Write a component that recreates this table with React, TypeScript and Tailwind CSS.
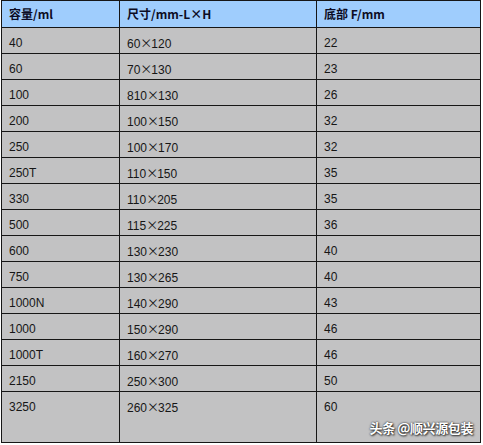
const header = ["容量/ml", "尺寸/mm-L×H", "底部 F/mm"];

const rows: [string, string, string, string][] = [
  ["40", "60", "120", "22"],
  ["60", "70", "130", "23"],
  ["100", "810", "130", "26"],
  ["200", "100", "150", "32"],
  ["250", "100", "170", "32"],
  ["250T", "110", "150", "35"],
  ["330", "110", "205", "35"],
  ["500", "115", "225", "36"],
  ["600", "130", "230", "40"],
  ["750", "130", "265", "40"],
  ["1000N", "140", "290", "43"],
  ["1000", "150", "290", "46"],
  ["1000T", "160", "270", "46"],
  ["2150", "250", "300", "50"],
  ["3250", "260", "325", "60"],
];

const body = "border-r border-b border-[#161616] bg-[#c2c2c3] pl-[7px] pt-[8px] text-[12px] leading-[14px] text-[#161616]";

function Size({ w, h }: { w: string; h: string }) {
  return (
    <span>
      {w}
      <span className="inline-block w-[11px] text-center font-['Noto_Sans_CJK_SC',sans-serif] text-[12px]">×</span>
      {h}
    </span>
  );
}

export default function App() {
  return (
    <div className="relative h-[445px] w-[483px] bg-white font-['Liberation_Sans','Noto_Sans_CJK_SC',sans-serif]">
      <div className="ml-px grid w-[480px] grid-cols-[118px_197px_164px] border-l border-t border-[#161616]">
        {header.map((h) => (
          <div
            key={h}
            className="h-[27px] border-r border-b border-[#161616] bg-[#9fcdfd] pl-[7px] pt-[6px] text-[12px] font-bold leading-[14px] text-[#0c0c24] font-['Noto_Sans_CJK_SC',sans-serif]"
          >
            {h}
          </div>
        ))}
        {rows.map((r, i) => {
          const hc = i === rows.length - 1 ? "h-[51px]" : "h-[26px]";
          return (
            <div key={r[0]} className="contents">
              <div className={`${hc} ${body}`}>{r[0]}</div>
              <div className={`${hc} ${body}`}>
                <Size w={r[1]} h={r[2]} />
              </div>
              <div className={`${hc} ${body}`}>{r[3]}</div>
            </div>
          );
        })}
      </div>

      {/* watermark */}
      <div className="absolute right-[10px] top-[419px] text-[13px] font-semibold leading-[18px] tracking-[-0.4px] text-white font-['Noto_Sans_CJK_SC',sans-serif] [text-shadow:0_0_2px_rgba(0,0,0,0.9),1px_1px_2px_rgba(0,0,0,0.7)]">
        头条 @顺兴源包装
      </div>
    </div>
  );
}
